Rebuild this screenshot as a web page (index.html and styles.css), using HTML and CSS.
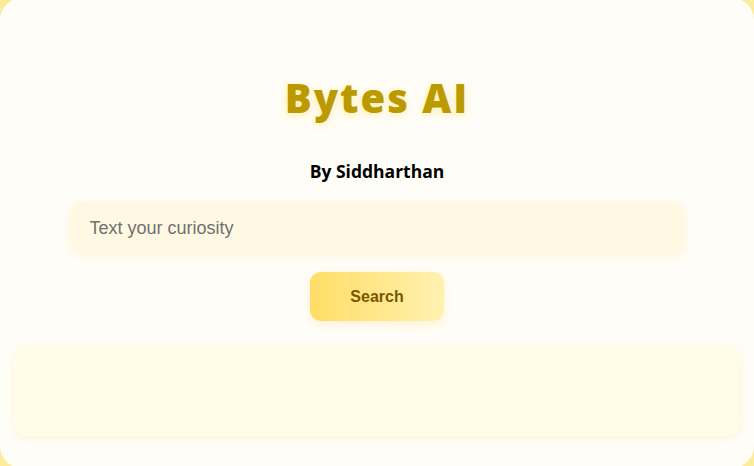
FILE: index.html
```html
<!DOCTYPE html>
<html>
<head>
<meta charset="utf-8">
<link rel="stylesheet" href="styles.css">
</head>
<body>
<main class="app">
  <h1 class="title">Bytes AI</h1>
  <p class="author">By Siddharthan</p>
  <div class="search-row">
    <input class="query" type="text" placeholder="Text your curiosity">
  </div>
  <button class="search-btn">Search</button>
  <section class="result"></section>
</main>
</body>
</html>
```

FILE: styles.css
```css
html, body {
  margin: 0;
  padding: 0;
  height: 100%;
}
body {
  background: #fdeb9c;
  overflow: hidden;
}
.app {
  box-sizing: border-box;
  height: 470px;
  margin-top: -2px;
  background: #fffdf7;
  border-radius: 22px;
  padding: 76px 14px 0;
  display: flex;
  flex-direction: column;
  align-items: center;
}
.title {
  margin: 0;
  font-family: "Open Sans", sans-serif;
  font-weight: 800;
  font-size: 40px;
  line-height: 48px;
  letter-spacing: 2px;
  color: #bb9a00;
  text-shadow: 0 2px 8px rgba(255, 220, 80, 0.45);
}
.author {
  margin: 37px 0 0;
  font-family: "Open Sans", sans-serif;
  font-weight: 700;
  font-size: 17.5px;
  line-height: 24px;
  color: #000;
}
.search-row {
  margin-top: 19px;
  width: 615px;
}
.query {
  box-sizing: border-box;
  width: 100%;
  height: 52px;
  border: none;
  outline: none;
  border-radius: 12px;
  background: #fff9e4;
  box-shadow: 0 2px 10px rgba(250, 225, 150, 0.25);
  padding: 0 20px;
  font-family: "Liberation Sans", Arial, sans-serif;
  font-size: 18px;
  color: #333;
}
.query::placeholder {
  color: #707070;
}
.search-btn {
  margin-top: 18px;
  width: 134px;
  height: 49px;
  border: none;
  border-radius: 11px;
  background: linear-gradient(to right, #ffdd66, #fff2b0);
  box-shadow: 0 3px 10px rgba(250, 215, 120, 0.3);
  font-family: "Liberation Sans", Arial, sans-serif;
  font-weight: 700;
  font-size: 16px;
  color: #7a5600;
}
.result {
  align-self: stretch;
  margin-top: 25px;
  height: 90px;
  background: #fffce8;
  border-radius: 12px;
  box-shadow: 0 2px 10px rgba(250, 225, 160, 0.35);
}
```
